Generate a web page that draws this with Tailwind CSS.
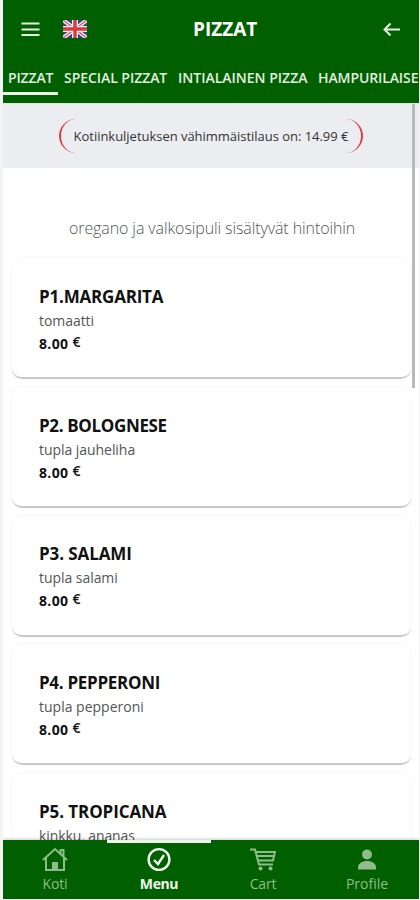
<!DOCTYPE html>
<html lang="fi">
<head>
  <meta charset="UTF-8" />
  <meta name="viewport" content="width=device-width, initial-scale=1.0"/>
  <title>Pizzat</title>
  <script src="https://cdn.jsdelivr.net/npm/@tailwindcss/browser@4"></script>
</head>
<body class="h-[900px] overflow-hidden bg-[#f3f3f3] pl-[3px] pr-px font-['Open_Sans','Noto_Sans',sans-serif]">
  <div class="relative flex h-[899px] flex-col overflow-hidden bg-white">

    <!-- Header -->
    <header class="h-[103px] shrink-0 overflow-hidden bg-[#006000] text-white">
      <div class="flex h-[58px] items-center pl-[18px] pr-[19px]">
        <svg class="h-[16px] w-[19px]" viewBox="0 0 19 16" fill="none" stroke="#e6efe2" stroke-width="2"><path d="M0.5 2.500h18M0.5 8.500h18M0.5 14h18"/></svg>
        <svg class="ml-[23px] h-[18px] w-[24px]" viewBox="0 0 24 18">
          <path fill="#27468c" d="M0 0h24v18H0z"/>
          <path stroke="#f4eeee" stroke-width="4" d="M0 0l24 18M24 0L0 18"/>
          <path stroke="#d8565c" stroke-width="1.3" d="M0 0l24 18M24 0L0 18"/>
          <path stroke="#f4eeee" stroke-width="6" d="M12 0v18M0 9h24"/>
          <path stroke="#d83a40" stroke-width="3.4" d="M12 0v18M0 9h24"/>
        </svg>
        <h1 class="ml-[106px] w-[64px] whitespace-nowrap text-[19px] font-bold">PIZZAT</h1>
        <svg class="ml-auto h-[14px] w-[17px]" viewBox="0 0 17 14" fill="none" stroke="#e6efe2" stroke-width="2"><path d="M17 7.500H1.5M7.5 1.500L1.5 7.500l6 6"/></svg>
      </div>
      <nav class="flex h-[37px] gap-[11px] whitespace-nowrap pl-[5px] text-[14px] font-semibold text-[#e4eee0]">
        <div class="relative w-[45px] shrink-0 leading-[39px] tracking-[-0.15px]">PIZZAT
          <div class="absolute bottom-0 -left-[5px] h-[3px] w-[55px] bg-[#edf5ea]"></div>
        </div>
        <div class="w-[103px] shrink-0 leading-[39px] tracking-[-0.05px]">SPECIAL PIZZAT</div>
        <div class="w-[129px] shrink-0 leading-[39px]">INTIALAINEN PIZZA</div>
        <div class="shrink-0 leading-[39px] tracking-[-0.1px]">HAMPURILAISE</div>
      </nav>
    </header>

    <!-- Minimum order -->
    <div class="flex h-[65px] shrink-0 items-center justify-center border-t border-[#dfe5df] bg-[#ecedf0]">
      <div class="flex h-[34px] w-[304px] items-center justify-center whitespace-nowrap rounded-[17px] border-x-2 border-[#dd3b3f] pt-px text-[13px] tracking-[-0.03px] text-[#333]">Kotiinkuljetuksen vähimmäistilaus on: 14.99 €</div>
    </div>

    <p class="mt-[48px] h-[42px] shrink-0 whitespace-nowrap pl-[66px] text-[16px] font-light leading-[25px] tracking-[-0.1px] text-[#555]">oregano ja valkosipuli sisältyvät hintoihin</p>

    <!-- Menu items -->
    <main class="flex flex-col gap-[7.75px] pl-[9px] pr-2">
      <section class="h-[121px] shrink-0 rounded-[10px] border-b-2 border-[#c9c9c9] pl-[27px] pt-[27px] shadow-[0_0_2px_#00000014]">
        <h2 class="text-[17px] font-bold leading-[24px] tracking-[-0.2px] text-[#111]">P1.MARGARITA</h2>
        <p class="text-[14px] leading-[24px] tracking-[-0.05px] text-[#555]">tomaatti</p>
        <p class="text-[14px] font-bold leading-[22px] tracking-[0.35px] text-[#111]">8.00 <span class="relative -top-[2px] font-semibold">€</span></p>
      </section>
      <section class="h-[121px] shrink-0 rounded-[10px] border-b-2 border-[#c9c9c9] pl-[27px] pt-[27px] shadow-[0_0_2px_#00000014]">
        <h2 class="text-[17px] font-bold leading-[24px] tracking-[-0.35px] text-[#111]">P2. BOLOGNESE</h2>
        <p class="text-[14px] leading-[24px] tracking-[-0.05px] text-[#555]">tupla jauheliha</p>
        <p class="text-[14px] font-bold leading-[22px] tracking-[0.35px] text-[#111]">8.00 <span class="relative -top-[2px] font-semibold">€</span></p>
      </section>
      <section class="h-[121px] shrink-0 rounded-[10px] border-b-2 border-[#c9c9c9] pl-[27px] pt-[26px] shadow-[0_0_2px_#00000014]">
        <h2 class="text-[17px] font-bold leading-[24px] tracking-[-0.1px] text-[#111]">P3. SALAMI</h2>
        <p class="text-[14px] leading-[24px] tracking-[-0.05px] text-[#555]">tupla salami</p>
        <p class="text-[14px] font-bold leading-[22px] tracking-[0.35px] text-[#111]">8.00 <span class="relative -top-[2px] font-semibold">€</span></p>
      </section>
      <section class="h-[121px] shrink-0 rounded-[10px] border-b-2 border-[#c9c9c9] pl-[27px] pt-[27px] shadow-[0_0_2px_#00000014]">
        <h2 class="text-[17px] font-bold leading-[24px] tracking-[-0.3px] text-[#111]">P4. PEPPERONI</h2>
        <p class="text-[14px] leading-[24px] tracking-[0px] text-[#555]">tupla pepperoni</p>
        <p class="text-[14px] font-bold leading-[22px] tracking-[0.35px] text-[#111]">8.00 <span class="relative -top-[2px] font-semibold">€</span></p>
      </section>
      <section class="h-[121px] shrink-0 rounded-[10px] pl-[27px] pt-[27px] shadow-[0_0_2px_#00000014]">
        <h2 class="text-[17px] font-bold leading-[24px] tracking-[-0.1px] text-[#111]">P5. TROPICANA</h2>
        <p class="text-[14px] leading-[24px] tracking-[-0.1px] text-[#555]">kinkku, ananas</p>
      </section>
    </main>

    <!-- Scrollbar -->
    <div class="absolute right-[4px] top-[104px] h-[284px] w-[3px] bg-[#b9b9b9]"></div>

    <!-- Bottom navigation -->
    <footer class="absolute inset-x-0 bottom-0 grid h-[59px] grid-cols-4 bg-[#006000] text-center text-[14px] leading-[18px] text-[#8fbc8a] shadow-[0_-1px_3px_#00000033]">
      <div class="flex flex-col items-center pt-[7px]">
        <svg class="h-[25px] w-[26px]" viewBox="0 0 26 25" fill="none" stroke="currentColor" stroke-width="2"><path d="M1 13L13 2l12 11M18.5 6.500V3h3v6.500M4 11v12h18V11"/><path fill="currentColor" stroke="none" d="M10 15h6v8h-6z"/></svg>
        <span class="mt-[3px] tracking-[-0.1px]">Koti</span>
      </div>
      <div class="relative flex flex-col items-center pt-[7px] font-bold text-[#f0f7ee]">
        <div class="absolute right-0 top-0 h-[3px] w-[104px] bg-[#edf5ea]"></div>
        <svg class="h-[25px] w-[24px]" viewBox="0 0 24 25" fill="none" stroke="currentColor" stroke-width="2.400"><circle cx="12" cy="12.500" r="10.400"/><path d="M7 13l4 4 6-9"/></svg>
        <span class="mt-[3px] tracking-[-0.4px]">Menu</span>
      </div>
      <div class="flex flex-col items-center pt-[7px]">
        <svg class="h-[25px] w-[26px]" viewBox="0 0 26 25" fill="none" stroke="currentColor" stroke-width="2"><path d="M0 2.500h5L9 17.500h14M5.500 5H25l-2 8.500H8M7 9h16"/><circle cx="10.500" cy="21.500" r="2" fill="currentColor" stroke="none"/><circle cx="20.500" cy="21.500" r="2" fill="currentColor" stroke="none"/></svg>
        <span class="mt-[3px] tracking-[-0.2px]">Cart</span>
      </div>
      <div class="flex flex-col items-center pt-[7px]">
        <svg class="h-[25px] w-[20px]" viewBox="0 0 20 25" fill="currentColor"><circle cx="10" cy="7.500" r="5"/><path d="M1 22.500v-2c0-4 4-6.500 9-6.500s9 2.500 9 6.500v2z"/></svg>
        <span class="mt-[3px]">Profile</span>
      </div>
    </footer>
  </div>
</body>
</html>
